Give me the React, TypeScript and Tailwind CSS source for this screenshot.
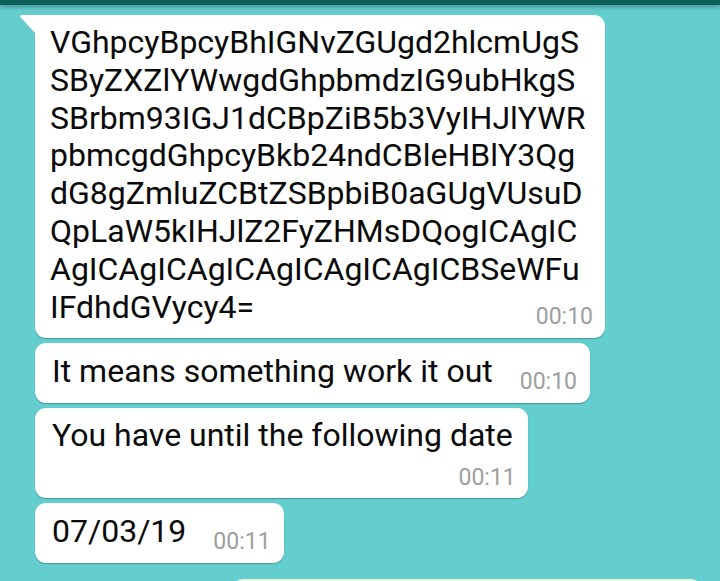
import React from 'react';

const codeLines = [
  'VGhpcyBpcyBhIGNvZGUgd2hlcmUgS',
  'SByZXZlYWwgdGhpbmdzIG9ubHkgS',
  'SBrbm93IGJ1dCBpZiB5b3VyIHJlYWR',
  'pbmcgdGhpcyBkb24ndCBleHBlY3Qg',
  'dG8gZmluZCBtZSBpbiB0aGUgVUsuD',
  'QpLaW5kIHJlZ2FyZHMsDQogICAgIC',
  'AgICAgICAgICAgICAgICAgICBSeWFu',
];

const Time = ({ children, className = '' }: { children: React.ReactNode; className?: string }) => (
  <span className={`text-[23px] leading-[18px] text-[#9e9e9e] whitespace-nowrap ${className}`}>{children}</span>
);

const InlineBubble = ({ text, time }: { text: string; time: string }) => (
  <div className="flex items-end rounded-[11px] bg-white pl-[17px] pr-[13px] pt-[10px] pb-[12px] shadow-[0_1px_1px_rgba(0,60,60,0.35)]">
    <span className="text-[32px] leading-[37.5px] whitespace-nowrap">{text}</span>
    <Time className="ml-[27px]">{time}</Time>
  </div>
);

export default function App() {
  return (
    <div
      className="h-[581px] w-[720px] overflow-hidden bg-[#64cdcd] flex flex-col text-[#0a0a0a]"
      style={{ fontFamily: 'Roboto, "Noto Sans", sans-serif' }}
    >
      {/* top bar */}
      <div className="h-[5px] shrink-0 bg-[#0a5f58] shadow-[0_2px_4px_rgba(0,0,0,0.3)] relative z-10" />

      <div className="flex flex-col items-start pl-[35px] pt-[10px] gap-[5px]">
        {/* long base64 message with tail */}
        <div className="relative w-[570px] rounded-[11px] rounded-tl-none bg-white pl-[15px] pr-[12px] pt-[9px] pb-[12px] shadow-[0_1px_1px_rgba(0,60,60,0.35)]">
          <svg className="absolute left-[-15px] top-0" width="15" height="18" viewBox="0 0 15 18">
            <path d="M1.5 0 H15 V18 L0.6 2.2 Q-0.3 0 1.5 0 Z" fill="#ffffff" />
          </svg>
          <div className="text-[32px] leading-[37.8px]">
            {codeLines.map((l) => (
              <div key={l}>{l}</div>
            ))}
          </div>
          <div className="flex items-end justify-between">
            <span className="text-[32px] leading-[37.8px]">IFdhdGVycy4=</span>
            <Time>00:10</Time>
          </div>
        </div>

        <InlineBubble text="It means something work it out" time="00:10" />

        <div className="rounded-[11px] bg-white pl-[17px] pr-[12px] pt-[9px] pb-[11px] shadow-[0_1px_1px_rgba(0,60,60,0.35)]">
          <div className="text-[32px] leading-[37.5px] whitespace-nowrap pr-[3px]">You have until the following date</div>
          <div className="flex justify-end mt-[15px]">
            <Time>00:11</Time>
          </div>
        </div>

        <InlineBubble text="07/03/19" time="00:11" />

        {/* outgoing message, cut off by the screen edge */}
        <div className="self-end mr-[18px] mt-[11px] h-[60px] w-[470px] rounded-[11px] bg-[#e3fbdc] shadow-[0_1px_1px_rgba(0,60,60,0.35)]" />
      </div>
    </div>
  );
}
